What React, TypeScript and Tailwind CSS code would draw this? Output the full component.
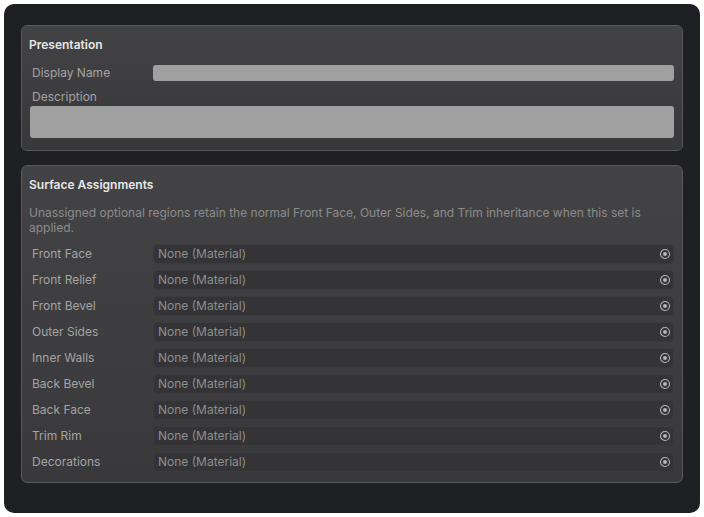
import React from "react";

const rows = [
  "Front Face",
  "Front Relief",
  "Front Bevel",
  "Outer Sides",
  "Inner Walls",
  "Back Bevel",
  "Back Face",
  "Trim Rim",
  "Decorations",
];

function TargetIcon() {
  return (
    <svg width="12" height="12" viewBox="0 0 12 12" className="shrink-0">
      <circle cx="6" cy="6" r="4.5" fill="none" stroke="#b4b4b4" strokeWidth="1.1" />
      <circle cx="6" cy="6" r="2" fill="#b4b4b4" />
    </svg>
  );
}

export default function App() {
  return (
    <div className="w-[704px] h-[517px] bg-white p-[4px] font-['Inter','Liberation_Sans',sans-serif]">
      <div className="w-[696px] h-[509px] rounded-[10px] bg-[#1f2024] pt-[21px] px-[17px] flex flex-col gap-[14px]">
        {/* Presentation */}
        <div className="h-[126px] rounded-[6px] border border-[#57575a] bg-gradient-to-b from-[#434345] to-[#38383a] pl-[7px] pr-[8px] pt-[11px] flex flex-col">
          <div className="h-[16px] leading-[16px] text-[12px] font-semibold text-[#e6e6e6]">Presentation</div>
          <div className="mt-[12px] flex items-center h-[16px]">
            <div className="w-[124px] pl-[3px] text-[12px] text-[#a3a3a3] leading-[16px]">Display Name</div>
            <div className="flex-1 h-[16px] rounded-[3px] bg-[#a0a0a0]" />
          </div>
          <div className="mt-[8px] pl-[3px] h-[16px] leading-[16px] text-[12px] text-[#a3a3a3]">Description</div>
          <div className="mt-[1px] ml-[1px] h-[32px] rounded-[3px] bg-[#a0a0a0]" />
        </div>

        {/* Surface Assignments */}
        <div className="h-[318px] rounded-[6px] border border-[#57575a] bg-gradient-to-b from-[#434345] to-[#39393b] pl-[7px] pr-[8px] pt-[11px] flex flex-col">
          <div className="h-[16px] leading-[16px] text-[12px] font-semibold text-[#e6e6e6]">Surface Assignments</div>
          <div className="mt-[12px] text-[12px] leading-[15px] text-[#8c8c8c]">
            Unassigned optional regions retain the normal Front Face, Outer Sides, and Trim inheritance when this set is applied.
          </div>
          <div className="mt-[9px] flex flex-col gap-[6px]">
            {rows.map((r) => (
              <div key={r} className="flex items-center h-[20px]">
                <div className="w-[124px] pl-[3px] text-[12px] text-[#a3a3a3] leading-[16px]">{r}</div>
                <div className="flex-1 h-[20px] rounded-[4px] bg-[#343436] border border-[#3b3b3d] flex items-center pl-[4px] pr-[2px] justify-between">
                  <span className="text-[12px] text-[#8e8e8e] leading-[16px]">None (Material)</span>
                  <TargetIcon />
                </div>
              </div>
            ))}
          </div>
        </div>
      </div>
    </div>
  );
}
